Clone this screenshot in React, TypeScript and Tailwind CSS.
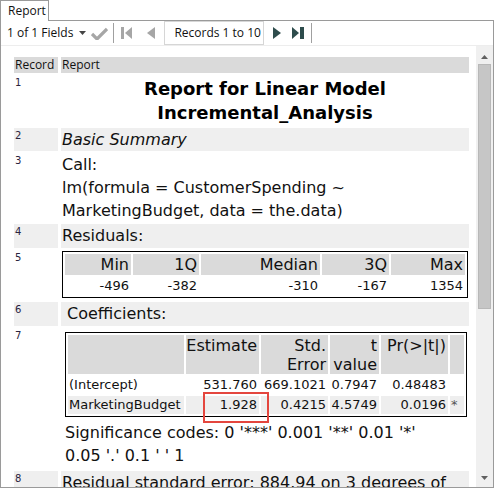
import React from 'react'

const ui = "font-['Open_Sans','Noto_Sans',sans-serif]"
const vd = "font-['DejaVu_Sans','Verdana',sans-serif]"

type RowProps = {
  n?: string
  shade?: boolean
  className?: string
  children?: React.ReactNode
}

// one record line: number cell + report cell
function Row({ n, shade, className, children }: RowProps): React.ReactElement {
  return (
    <div className="flex gap-[3px]">
      <div
        className={`w-[44px] shrink-0 pl-[1px] pt-[2px] text-[10px] leading-[12px] text-[#2a2440] ${
          shade ? 'bg-[#efefef]' : ''
        }`}
      >
        {n}
      </div>
      <div className={`min-w-0 flex-1 ${shade ? 'bg-[#efefef]' : ''} ${className ?? ''}`}>
        {children}
      </div>
    </div>
  )
}

const residHeads = ['Min', '1Q', 'Median', '3Q', 'Max']
const residVals = ['-496', '-382', '-310', '-167', '1354']

const coefRows = [
  { name: '(Intercept)', vals: ['531.760', '669.1021', '0.7947', '0.48483', ''], shade: false },
  { name: 'MarketingBudget', vals: ['1.928', '0.4215', '4.5749', '0.0196', '*'], shade: true },
]

function Tri({ dir, color }: { dir: 'l' | 'r'; color: string }): React.ReactElement {
  return (
    <svg width="8" height="12" viewBox="0 0 8 12">
      <path d={dir === 'l' ? 'M8 0 L0 6 L8 12 Z' : 'M0 0 L8 6 L0 12 Z'} fill={color} />
    </svg>
  )
}

export default function App(): React.ReactElement {
  return (
    <div className={`h-[490px] w-[496px] overflow-hidden bg-white text-[#111] ${vd}`}>
      {/* tab strip */}
      <div className="flex h-[21px]">
        <div
          className={`flex w-[49px] items-center border-x border-t border-[#9a9a9a] pl-[7px] text-[12px] ${ui}`}
        >
          Report
        </div>
        <div className="w-[445px] border-b border-[#9a9a9a]" />
      </div>

      {/* frame */}
      <div className="flex h-[467px] w-[494px] flex-col border-x border-b border-[#9a9a9a]">
        {/* toolbar */}
        <div className={`flex h-[25px] shrink-0 items-center border-b border-[#ededed] text-[12px] ${ui}`}>
          <span className="ml-[6px]">1 of 1 Fields</span>
          <svg className="ml-[6px]" width="7" height="4" viewBox="0 0 7 4">
            <path d="M0 0 H7 L3.5 4 Z" fill="#444" />
          </svg>
          <svg className="ml-[5px]" width="17" height="13" viewBox="0 0 17 13">
            <path d="M1 7 L6 12 L16 2" stroke="#a6a6a6" strokeWidth="3.2" fill="none" />
          </svg>
          <div className="ml-[5px] h-[20px] w-px bg-[#a0a0a0]" />
          <svg className="ml-[7px]" width="11" height="12" viewBox="0 0 11 12">
            <rect x="0" y="0" width="3" height="12" fill="#a6a6a6" />
            <path d="M11 0 L4 6 L11 12 Z" fill="#a6a6a6" />
          </svg>
          <div className="ml-[15px]">
            <Tri dir="l" color="#a6a6a6" />
          </div>
          <div className="ml-[9px] flex h-[24px] w-[100px] items-center border border-[#d6d6d6] pl-[9px]">
            Records 1 to 10
          </div>
          <div className="ml-[9px]">
            <Tri dir="r" color="#2e4c4c" />
          </div>
          <svg className="ml-[11px]" width="12" height="12" viewBox="0 0 12 12">
            <path d="M0 0 L7 6 L0 12 Z" fill="#2e4c4c" />
            <rect x="8" y="0" width="4" height="12" fill="#2e4c4c" />
          </svg>
          <div className="ml-[7px] h-[20px] w-px bg-[#a0a0a0]" />
        </div>

        {/* body */}
        <div className="flex min-h-0 flex-1">
          <div className="min-w-0 flex-1 overflow-hidden pt-[11px] pl-[13px] pr-[7px]">
            <div className="flex flex-col gap-[2px]">
              {/* column headers */}
              <div className={`flex h-[16px] gap-[3px] text-[12px] leading-[16px] ${ui}`}>
                <div className="w-[44px] shrink-0 bg-[#dadada] pl-[1px]">Record</div>
                <div className="flex-1 bg-[#dadada] pl-[1px]">Report</div>
              </div>

              <Row n="1" className="pt-[2px] pb-[1px]">
                <div className="text-center text-[18px] font-bold leading-[24px] text-black">
                  Report for Linear Model
                  <br />
                  Incremental_Analysis
                </div>
              </Row>

              <Row n="2" shade>
                <div className="pl-[1px] text-[16px] italic leading-[23px]">Basic Summary</div>
              </Row>

              <Row n="3">
                <div className="pl-[1px] text-[16px] leading-[23px]">
                  Call:
                  <br />
                  lm(formula = CustomerSpending ~
                  <br />
                  MarketingBudget, data = the.data)
                </div>
              </Row>

              <Row n="4" shade>
                <div className="pl-[1px] text-[16px] leading-[24px]">Residuals:</div>
              </Row>

              <Row n="5" className="pt-[1px] pb-[2px]">
                <div className="ml-[1px] grid w-[406px] grid-cols-[66px_66px_119px_67px_1fr] gap-[2px] border border-black p-[2px]">
                  {residHeads.map((h) => (
                    <div key={h} className="bg-[#dadada] pr-[2px] text-right text-[16px] leading-[21px]">
                      {h}
                    </div>
                  ))}
                  {residVals.map((v) => (
                    <div key={v} className="pr-[2px] text-right text-[13px] leading-[18px]">
                      {v}
                    </div>
                  ))}
                </div>
              </Row>

              <Row n="6" shade>
                <div className="pl-[6px] text-[16px] leading-[24px]">Coefficients:</div>
              </Row>

              <Row n="7" className="pt-[4px] pb-[2px]">
                <div className="relative ml-[4px] w-[402px]">
                  <div className="grid grid-cols-[116px_73px_67px_49px_67px_1fr] gap-[2px] border border-black p-[2px]">
                    <div className="h-[39px] bg-[#dadada]" />
                    <div className="bg-[#dadada] pt-[1px] pr-[2px] text-right text-[16px] leading-[19px]">
                      Estimate
                    </div>
                    <div className="bg-[#dadada] pt-[1px] pr-[2px] text-right text-[16px] leading-[19px]">
                      Std.
                      <br />
                      Error
                    </div>
                    <div className="bg-[#dadada] pt-[1px] pr-[2px] text-right text-[16px] leading-[19px]">
                      t
                      <br />
                      value
                    </div>
                    <div className="bg-[#dadada] pt-[1px] pr-[2px] text-right text-[16px] leading-[19px]">
                      Pr(&gt;|t|)
                    </div>
                    <div className="bg-[#dadada]" />
                    {coefRows.map((r) => (
                      <React.Fragment key={r.name}>
                        <div
                          className={`pl-[1px] text-[13px] leading-[18px] ${r.shade ? 'bg-[#eeeeee]' : ''}`}
                        >
                          {r.name}
                        </div>
                        {r.vals.map((v, i) => (
                          <div
                            key={i}
                            className={`pr-[2px] text-[13px] leading-[18px] ${
                              i === 4 ? 'pl-[1px] text-left text-[#555]' : 'text-right'
                            } ${r.shade ? 'bg-[#eeeeee]' : ''}`}
                          >
                            {v}
                          </div>
                        ))}
                      </React.Fragment>
                    ))}
                  </div>
                  {/* highlight box */}
                  <div className="absolute top-[60px] left-[138px] h-[31px] w-[66px] border-2 border-[#e4463e]" />
                </div>
                <div className="mt-[4px] pl-[4px] text-[16px] leading-[23px]">
                  Significance codes: 0 &apos;***&apos; 0.001 &apos;**&apos; 0.01 &apos;*&apos;
                  <br />
                  0.05 &apos;.&apos; 0.1 &apos; &apos; 1
                </div>
              </Row>

              <Row n="8" shade>
                <div className="whitespace-nowrap pl-[1px] text-[16px] leading-[24px]">
                  Residual standard error: 884.94 on 3 degrees of
                </div>
              </Row>
            </div>
          </div>

          {/* scrollbar */}
          <div className="flex w-[17px] shrink-0 flex-col items-center bg-[#f0f0f0]">
            <svg className="mt-[9px]" width="7" height="4" viewBox="0 0 7 4">
              <path d="M0 4 H7 L3.5 0 Z" fill="#606060" />
            </svg>
            <div className="mt-[5px] h-[245px] w-[13px] border border-[#b8b8b8] bg-[#c6c6c6]" />
            <div className="flex-1" />
            <svg className="mb-[7px]" width="7" height="4" viewBox="0 0 7 4">
              <path d="M0 0 H7 L3.5 4 Z" fill="#606060" />
            </svg>
          </div>
        </div>
      </div>
    </div>
  )
}
